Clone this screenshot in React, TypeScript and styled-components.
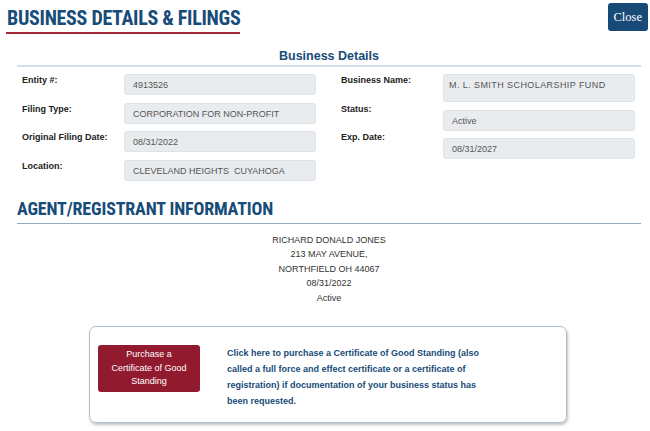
import React from "react";
import styled, { createGlobalStyle } from "styled-components";

const Global = createGlobalStyle`
  html, body { margin: 0; padding: 0; background: #ffffff; }
  body { font-family: "Liberation Sans", Arial, sans-serif; }
`;

const Page = styled.div`
  width: 650px;
  height: 431px;
  overflow: hidden;
  box-sizing: border-box;
  padding: 3px 2px 0 6px;
`;

const Header = styled.div`
  display: flex;
  justify-content: space-between;
  align-items: flex-start;
`;

const PageTitle = styled.h1`
  margin: 0;
  padding: 3px 0 2px 1px;
  border-bottom: 2px solid #a1263a;
  font-family: Roboto, sans-serif;
  font-stretch: 75%;
  font-weight: 700;
  font-size: 20px;
  line-height: 24px;
  letter-spacing: -0.3px;
  color: #174c79;
`;

const CloseButton = styled.button`
  height: 28px;
  padding: 0 6px;
  border: none;
  border-radius: 3px;
  background: #184a77;
  color: #ffffff;
  font-family: "Liberation Serif", "Times New Roman", serif;
  font-size: 12.5px;
`;

const Section = styled.div`
  margin: 0 7px 0 11px;
`;

const SectionTitle = styled.div`
  text-align: center;
  font-weight: 700;
  font-size: 12.5px;
  line-height: 15px;
  color: #174c79;
  padding: 15px 0 1px;
  border-bottom: 2px solid #d3dfe9;
`;

const Grid = styled.div`
  display: grid;
  grid-template-columns: 294px 294px;
  column-gap: 25px;
  align-items: start;
  padding: 7px 0 0 5px;
`;

const Column = styled.div`
  display: flex;
  align-items: flex-start;
`;

const Labels = styled.div`
  width: 102px;
  flex: none;
  display: flex;
  flex-direction: column;
  gap: 17.5px;
  padding-top: 1px;
`;

const Label = styled.div`
  font-weight: 700;
  font-size: 9px;
  line-height: 11px;
  color: #222;
`;

const Values = styled.div`
  flex: 1;
  display: flex;
  flex-direction: column;
  gap: 7.5px;
`;

const Value = styled.div<{ $tall?: boolean }>`
  box-sizing: border-box;
  height: ${(p) => (p.$tall ? 28 : 21)}px;
  padding: ${(p) => (p.$tall ? "5px 5px 0" : "5px 8px 0")};
  background: #e9ecef;
  border: 1px solid #dfe3e7;
  border-radius: 3px;
  font-size: 9px;
  line-height: 11px;
  color: #555;
  letter-spacing: ${(p) => (p.$tall ? "0.42px" : "0")};
  white-space: pre;
`;

const AgentTitle = styled.h2`
  margin: 17px 0 0;
  padding: 0 0 3px 0;
  border-bottom: 1px solid #8eaec6;
  font-family: Roboto, sans-serif;
  font-stretch: 75%;
  font-weight: 700;
  font-size: 18px;
  line-height: 22px;
  letter-spacing: -0.15px;
  color: #174c79;
`;

const Agent = styled.div`
  padding-top: 9px;
  text-align: center;
  font-size: 9px;
  line-height: 14.5px;
  color: #333;
`;

const CertBox = styled.div`
  box-sizing: border-box;
  width: 478px;
  height: 97px;
  margin: 21px 0 0 83px;
  padding: 18px 8px 0;
  display: flex;
  align-items: flex-start;
  gap: 27px;
  border: 1px solid #a9bfd3;
  border-radius: 7px;
  box-shadow: 1px 2px 3px rgba(0, 0, 0, 0.25);
`;

const CertButton = styled.button`
  box-sizing: border-box;
  width: 102px;
  height: 47px;
  flex: none;
  padding: 2px 10px;
  border: none;
  border-radius: 3px;
  background: #921a2e;
  color: #ffffff;
  font-family: "Liberation Sans", Arial, sans-serif;
  font-size: 9px;
  line-height: 13.5px;
`;

const CertText = styled.div`
  width: 258px;
  font-weight: 700;
  font-size: 9px;
  line-height: 16px;
  color: #174c79;
`;

export default function App() {
  return (
    <Page>
      <Global />
      <Header>
        <PageTitle>BUSINESS DETAILS &amp; FILINGS</PageTitle>
        <CloseButton>Close</CloseButton>
      </Header>
      <Section>
        <SectionTitle>Business Details</SectionTitle>
        <Grid>
          <Column>
            <Labels>
              <Label>Entity #:</Label>
              <Label>Filing Type:</Label>
              <Label>Original Filing Date:</Label>
              <Label>Location:</Label>
            </Labels>
            <Values>
              <Value>4913526</Value>
              <Value>CORPORATION FOR NON-PROFIT</Value>
              <Value>08/31/2022</Value>
              <Value>CLEVELAND HEIGHTS  CUYAHOGA</Value>
            </Values>
          </Column>
          <Column>
            <Labels>
              <Label>Business Name:</Label>
              <Label>Status:</Label>
              <Label>Exp. Date:</Label>
            </Labels>
            <Values>
              <Value $tall>M. L. SMITH SCHOLARSHIP FUND</Value>
              <Value>Active</Value>
              <Value>08/31/2027</Value>
            </Values>
          </Column>
        </Grid>
        <AgentTitle>AGENT/REGISTRANT INFORMATION</AgentTitle>
        <Agent>
          RICHARD DONALD JONES
          <br />
          213 MAY AVENUE,
          <br />
          NORTHFIELD OH 44067
          <br />
          08/31/2022
          <br />
          Active
        </Agent>
      </Section>
      <CertBox>
        <CertButton>Purchase a Certificate of Good Standing</CertButton>
        <CertText>
          Click here to purchase a Certificate of Good Standing (also called a full force and effect
          certificate or a certificate of registration) if documentation of your business status has
          been requested.
        </CertText>
      </CertBox>
    </Page>
  );
}
